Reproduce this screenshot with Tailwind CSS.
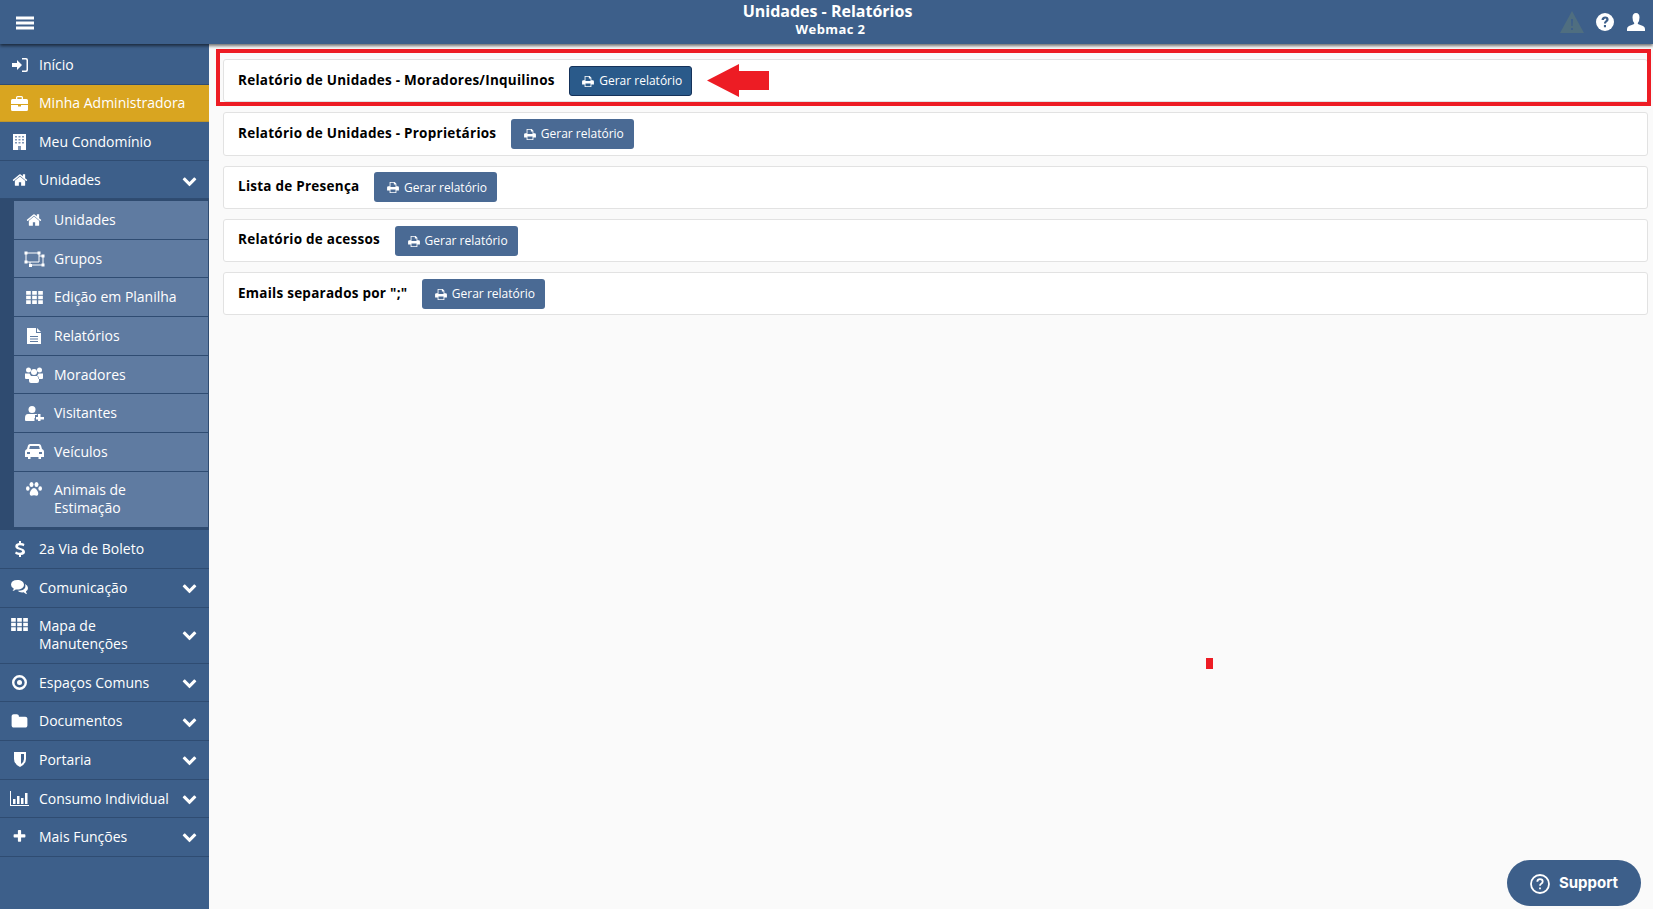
<!DOCTYPE html>
<html lang="pt-BR">

<head>
    <meta charset="UTF-8">
    <title>Unidades - Relatórios</title>
    <script src="https://cdn.jsdelivr.net/npm/@tailwindcss/browser@4"></script>
</head>

<body class="bg-[#fafafa] font-['Open_Sans',sans-serif] text-[14px] h-[909px] overflow-hidden relative">

    <svg class="hidden">
        <symbol id="chev" viewBox="0 0 1792 1792"><path d="M1683 808l-742 741q-19 19-45 19t-45-19l-742-741q-19-19-19-45.5t19-45.5l166-165q19-19 45-19t45 19l531 531 531-531q19-19 45-19t45 19l166 165q19 19 19 45.5t-19 45.5z"/></symbol>
        <symbol id="home" viewBox="0 0 1792 1792"><path d="M1472 992v480q0 26-19 45t-45 19h-384v-384h-256v384h-384q-26 0-45-19t-19-45v-480q0-1 .5-3t.5-3l575-474 575 474q1 2 1 6zm223-69l-62 74q-8 9-21 11h-3q-13 0-21-7l-692-577-692 577q-12 8-24 7-13-2-21-11l-62-74q-8-10-7-23.5t11-21.5l719-599q32-26 76-26t76 26l244 204v-195q0-14 9-23t23-9h192q14 0 23 9t9 23v408l219 182q10 8 11 21.5t-7 23.5z"/></symbol>
        <symbol id="grid" viewBox="0 0 18 14"><path d="M0 0h5v4H0zM6.500 0h5v4h-5zM13 0h5v4h-5zM0 5h5v4H0zM6.500 5h5v4h-5zM13 5h5v4h-5zM0 10h5v4H0zM6.500 10h5v4h-5zM13 10h5v4h-5z"/></symbol>
        <symbol id="print" viewBox="0 0 14 13"><path fill-rule="evenodd" d="M3 0h6l2 2v3h1.500A1.500 1.500 0 0 1 14 6.500V10h-3v3H3v-3H0V6.500A1.500 1.500 0 0 1 1.500 5H3zM4 1v5h6V3H8V1zM4 9v3h6V9z"/></symbol>
    </svg>

    <!-- Top bar -->
    <header class="h-[44px] bg-[#3d5f8a] shadow-[0_2px_3px_rgba(0,0,0,0.55)] relative z-10 flex items-center text-white">
        <svg class="w-[18px] h-[14px] ml-[16px] mt-[1px]" viewBox="0 0 18 14" fill="#fff"><path d="M0 .5h18v3H0zM0 5.500h18v3H0zM0 10.500h18v3H0z"/></svg>
        <div class="absolute left-[2px] right-0 top-0 text-center">
            <div class="text-[16px] font-bold leading-[20px] pt-[1px]">Unidades - Relatórios</div>
            <div class="text-[13px] font-bold leading-[16px] tracking-[0.4px] pl-[6px]">Webmac 2</div>
        </div>
        <div class="ml-auto flex items-center mr-[8px]">
            <svg class="w-[24px] h-[22px]" viewBox="0 0 24 22"><path d="M12 0l12 22H0z" fill="#4f6e80"/><path d="M11 8h2l-.4 7h-1.200zM11 17h2v2h-2z" fill="#3d5f8a"/></svg>
            <svg class="w-[18px] h-[18px] ml-[12px]" viewBox="0 0 18 18"><circle cx="9" cy="9" r="9" fill="#fff"/><path d="M5.500 7q.2-3.500 3.700-3.500 3.400 0 3.400 3 0 1.500-1.600 2.500-1 .6-1 1.500H7.900q0-1.900 1.400-2.800 1-.6 1-1.200 0-1-1.100-1-1.100 0-1.300 1.500zM7.900 12h2.100v2.300H7.900z" fill="#3d5f8a"/></svg>
            <svg class="w-[18px] h-[18px] ml-[13px]" viewBox="0 0 18 18" fill="#fff"><path d="M9 0q3.500 0 3.500 4.500 0 3.500-1.700 5.500-.3.800.6 1.300L16 13q2 .8 2 3v2H0v-2q0-2.200 2-3l4.600-1.700q.9-.5.600-1.300Q5.500 8 5.500 4.500 5.500 0 9 0z"/></svg>
        </div>
    </header>

    <div class="flex h-[865px]">
        <!-- Sidebar -->
        <nav class="w-[209px] shrink-0 bg-[#3d5f8a] text-white leading-[17.7px] pt-[1px]">
            <a class="flex items-center h-[40px] pr-[10px] border-b border-[#2f4c72]">
                <span class="w-[39px] flex justify-center"><svg class="w-[16px] h-[14px]" viewBox="0 0 16 14" fill="#fff"><path d="M0 5h5V2l5 5-5 5V9H0zM10 0h4q2 0 2 2v10q0 2-2 2h-4v-1.500h3.500q1 0 1-1v-9q0-1-1-1H10z"/></svg></span>Início
            </a>
            <a class="flex items-center h-[37px] pr-[10px] bg-[#d9a520] border-b border-[#c0952a]">
                <span class="w-[39px] flex justify-center"><svg class="w-[17px] h-[15px]" viewBox="0 0 17 15" fill="#fff"><path fill-rule="evenodd" d="M5 3V1.500Q5 0 6.500 0h4Q12 0 12 1.500V3h3.500Q17 3 17 4.500V8H0V4.500Q0 3 1.500 3zM6.300 3h4.400V1.300H6.300zM0 9h7v1.500h3V9h7v4.500q0 1.500-1.500 1.500h-14Q0 15 0 13.500z"/></svg></span>Minha Administradora
            </a>
            <a class="flex items-center h-[39px] pt-[1px] pr-[10px] border-b border-[#2f4c72]">
                <span class="w-[39px] flex justify-center"><svg class="w-[13px] h-[16px]" viewBox="0 0 13 16"><rect width="13" height="16" fill="#fff"/><path d="M2 2h2v1.500H2zM5.500 2h2v1.500h-2zM9 2h2v1.500H9zM2 5h2v1.500H2zM5.500 5h2v1.500h-2zM9 5h2v1.500H9zM2 8h2v1.500H2zM5.500 8h2v1.500h-2zM9 8h2v1.500H9zM5 12h3v4H5z" fill="#7f96b5"/></svg></span>Meu Condomínio
            </a>
            <a class="flex items-center h-[38px] pt-[1px] pr-[10px] border-b border-[#2f4c72]">
                <span class="w-[39px] flex justify-center"><svg class="w-[16px] h-[16px]" fill="#fff"><use href="#home"/></svg></span>Unidades
                <svg class="w-[15px] h-[15px] ml-auto mr-[2px]" fill="#fff"><use href="#chev"/></svg>
            </a>

            <!-- Submenu -->
            <div class="bg-[#2f4b70] pl-[14px] pr-[1px] pt-[2px] pb-[3px]">
                <a class="flex items-center h-[38.700px] bg-[#5f7ba1] border-b border-[#2f4c72]"><span class="w-[40px] flex justify-center"><svg class="w-[16px] h-[16px]" fill="#fff"><use href="#home"/></svg></span>Unidades</a>
                <a class="flex items-center h-[38.700px] bg-[#5f7ba1] border-b border-[#2f4c72]"><span class="w-[40px] flex justify-center"><svg class="w-[21px] h-[16px]" viewBox="0 0 21 16" fill="none" stroke="#fff"><path d="M2 2h13v9H2zM15 5h4v9H6v-3"/><path d="M.5.500h3v3h-3zM13.500.500h3v3h-3zM.5 9.500h3v3h-3zM17.500 3.500h3v3h-3zM17.500 12.500h3v3h-3zM5 13h3v3H5z" fill="#fff" stroke="none"/></svg></span>Grupos</a>
                <a class="flex items-center h-[38.700px] bg-[#5f7ba1] border-b border-[#2f4c72]"><span class="w-[40px] flex justify-center"><svg class="w-[17px] h-[13px]" fill="#fff"><use href="#grid"/></svg></span>Edição em Planilha</a>
                <a class="flex items-center h-[38.700px] bg-[#5f7ba1] border-b border-[#2f4c72]"><span class="w-[40px] flex justify-center"><svg class="w-[14px] h-[16px]" viewBox="0 0 14 16"><path d="M0 0h9v5h5v11H0z" fill="#fff"/><path d="M10 0l4 4h-4z" fill="#fff"/><path d="M3 8h8v1H3zM3 10.500h8v1H3zM3 13h8v1H3z" fill="#5f7ba1"/></svg></span>Relatórios</a>
                <a class="flex items-center h-[38.700px] bg-[#5f7ba1] border-b border-[#2f4c72]"><span class="w-[40px] flex justify-center"><svg class="w-[18px] h-[16px]" viewBox="0 0 18 16" fill="#fff"><circle cx="3.500" cy="3" r="2.500"/><circle cx="14.500" cy="3" r="2.500"/><circle cx="9" cy="5" r="3"/><path d="M0 6.500h4.500L6 9q-1.500 1-1.500 3H1q-1 0-1-1zM18 6.500h-4.500L12 9q1.500 1 1.500 3H17q1 0 1-1zM6 9h6q2 0 2 3v2q0 2-2 2H6q-2 0-2-2v-2q0-3 2-3z"/></svg></span>Moradores</a>
                <a class="flex items-center h-[38.700px] bg-[#5f7ba1] border-b border-[#2f4c72]"><span class="w-[40px] flex justify-center"><svg class="w-[19px] h-[15px]" viewBox="0 0 19 15" fill="#fff"><circle cx="7" cy="3.500" r="3.500"/><path d="M3 8h8q1 0 1.500 1H10v3h-.5v3H1q-1 0-1-1v-2q0-4 3-4zM13 8h2.500v3H19v2.500h-3.500V15H13v-1.500H11V11h2z"/></svg></span>Visitantes</a>
                <a class="flex items-center h-[38.700px] bg-[#5f7ba1] border-b border-[#2f4c72]"><span class="w-[40px] flex justify-center"><svg class="w-[19px] h-[15px]" viewBox="0 0 19 15" fill="#fff"><path fill-rule="evenodd" d="M5 0h9q1.500 0 2 1.500L17 5q2 .5 2 2.500V13h-3v2h-2.500v-2h-8v2H3v-2H0V7.500Q0 5.500 2 5l1-3.500Q3.500 0 5 0zM5 2L4.200 5h10.600L14 2zM2 8v2h3V8zM14 8v2h3V8z"/></svg></span>Veículos</a>
                <a class="flex items-start bg-[#5f7ba1] pt-[9px] h-[55.500px]"><span class="w-[40px] flex justify-center pt-[1px]"><svg class="w-[16px] h-[14px]" viewBox="0 0 16 14" fill="#fff"><ellipse cx="5.500" cy="2.500" rx="2" ry="2.500"/><ellipse cx="10.500" cy="2.500" rx="2" ry="2.500"/><ellipse cx="1.800" cy="6.500" rx="1.800" ry="2.300"/><ellipse cx="14.200" cy="6.500" rx="1.800" ry="2.300"/><path d="M8 6q2 0 3.500 3 1.500 2.500.5 4-1 1-2.500.5-1.500-.5-3 0-1.500.5-2.500-.5-1-1.500.5-4Q6 6 8 6z"/></svg></span><span>Animais de<br>Estimação</span></a>
            </div>

            <a class="flex items-center h-[38.700px] pr-[10px] border-b border-[#2f4c72]">
                <span class="w-[39px] flex justify-center"><svg class="w-[10px] h-[16px]" viewBox="0 0 10 16" fill="#fff"><path d="M4 0h2v2q2 .2 3.500 1L8.700 5.200Q7 4.300 5 4.300q-2 0-2 1.200 0 .9 2.500 1.500Q10 8 10 11q0 2.600-4 3v2H4v-2q-2.500-.2-4-1.400l1-2.100q2 1.200 4 1.200 2.200 0 2.200-1.400 0-.9-2.700-1.600Q.3 7.800.3 5.400.3 2.500 4 2z"/></svg></span>2a Via de Boleto
            </a>
            <a class="flex items-center h-[38.700px] pr-[10px] border-b border-[#2f4c72]">
                <span class="w-[39px] flex justify-center"><svg class="w-[17px] h-[15px]" viewBox="0 0 17 15" fill="#fff"><path d="M6.500 0C10 0 13 2 13 4.800s-3 4.800-6.500 4.800q-1 0-1.800-.2Q3.500 10.500 1.500 11 2.700 9.800 2.700 8.500 0 7.200 0 4.800 0 0 6.500 0z"/><path d="M14 4q3 1.300 3 4 0 2.200-2 3.300 0 1.500 1.200 3-2.200-.5-3.500-2-4 .5-6.200-1.500 6 .3 7.700-3.300.6-1.900-.2-3.500z"/></svg></span>Comunicação
                <svg class="w-[15px] h-[15px] ml-auto mr-[2px]" fill="#fff"><use href="#chev"/></svg>
            </a>
            <a class="flex items-center pt-[9px] pb-[11px] h-[56.700px] pr-[10px] border-b border-[#2f4c72]">
                <span class="w-[39px] flex justify-center self-start pt-[1px]"><svg class="w-[17px] h-[13px]" fill="#fff"><use href="#grid"/></svg></span><span>Mapa de<br>Manutenções</span>
                <svg class="w-[15px] h-[15px] ml-auto mr-[2px]" fill="#fff"><use href="#chev"/></svg>
            </a>
            <a class="flex items-center h-[38px] pr-[10px] border-b border-[#2f4c72]">
                <span class="w-[39px] flex justify-center"><svg class="w-[15px] h-[15px]" viewBox="0 0 15 15"><circle cx="7.500" cy="7.500" r="6.300" fill="none" stroke="#fff" stroke-width="2.400"/><circle cx="7.500" cy="7.500" r="2.500" fill="#fff"/></svg></span>Espaços Comuns
                <svg class="w-[15px] h-[15px] ml-auto mr-[2px]" fill="#fff"><use href="#chev"/></svg>
            </a>
            <a class="flex items-center h-[38.700px] pr-[10px] border-b border-[#2f4c72]">
                <span class="w-[39px] flex justify-center"><svg class="w-[17px] h-[17px]" viewBox="0 0 1792 1792" fill="#fff"><path d="M1728 608v704q0 92-66 158t-158 66h-1216q-92 0-158-66t-66-158v-960q0-92 66-158t158-66h320q92 0 158 66t66 158v32h672q92 0 158 66t66 158z"/></svg></span>Documentos
                <svg class="w-[15px] h-[15px] ml-auto mr-[2px]" fill="#fff"><use href="#chev"/></svg>
            </a>
            <a class="flex items-center h-[38.700px] pr-[10px] border-b border-[#2f4c72]">
                <span class="w-[39px] flex justify-center"><svg class="w-[12px] h-[15px]" viewBox="0 0 12 15"><path d="M0 0h12v7q0 5-6 8-6-3-6-8z" fill="#fff"/><path d="M7 2h3v5q0 3-3 5z" fill="#3d5f8a"/></svg></span>Portaria
                <svg class="w-[15px] h-[15px] ml-auto mr-[2px]" fill="#fff"><use href="#chev"/></svg>
            </a>
            <a class="flex items-center h-[38.400px] pr-[10px] border-b border-[#2f4c72]">
                <span class="w-[39px] flex justify-center"><svg class="w-[19px] h-[15px]" viewBox="0 0 19 15" fill="#fff"><path d="M0 0h1v14h18v1H0zM3 8h2.500v5H3zM7 5h2.500v8H7zM11 7h2.500v6H11zM15 2h2.500v11H15z"/></svg></span>Consumo Individual
                <svg class="w-[15px] h-[15px] ml-auto mr-[2px]" fill="#fff"><use href="#chev"/></svg>
            </a>
            <a class="flex items-center h-[38.700px] pr-[10px] border-b border-[#2f4c72]">
                <span class="w-[39px] flex justify-center"><svg class="w-[15px] h-[15px]" viewBox="0 0 1792 1792" fill="#fff"><path d="M1600 736v192q0 40-28 68t-68 28h-416v416q0 40-28 68t-68 28h-192q-40 0-68-28t-28-68v-416h-416q-40 0-68-28t-28-68v-192q0-40 28-68t68-28h416v-416q0-40 28-68t68-28h192q40 0 68 28t28 68v416h416q40 0 68 28t28 68z"/></svg></span>Mais Funções
                <svg class="w-[15px] h-[15px] ml-auto mr-[2px]" fill="#fff"><use href="#chev"/></svg>
            </a>
        </nav>

        <!-- Content -->
        <main class="flex-1 pl-[14px] pr-[5px] pt-[15px] flex flex-col gap-[10px]">
            <div class="h-[43.300px] bg-white border border-[#e2e2e2] rounded-[3px] pl-[14px] flex items-center gap-[14.500px]">
                <b class="font-bold text-[13.500px] tracking-[0.25px] text-black mb-[2px]">Relatório de Unidades - Moradores/Inquilinos</b>
                <button class="h-[30px] w-[123px] pt-[1px] pl-[3px] bg-[#2a5a8a] border border-[#15325a] rounded-[3px] text-white text-[12px] flex items-center justify-center gap-[5px]"><svg class="w-[12px] h-[11px]" fill="#fff"><use href="#print"/></svg>Gerar relatório</button>
            </div>
            <div class="h-[43.300px] bg-white border border-[#e2e2e2] rounded-[3px] pl-[14px] flex items-center gap-[14.500px]">
                <b class="font-bold text-[13.500px] tracking-[0.25px] text-black mb-[2px]">Relatório de Unidades - Proprietários</b>
                <button class="h-[30px] w-[123px] pt-[1px] pl-[3px] bg-[#4a6a94] rounded-[3px] text-white text-[12px] flex items-center justify-center gap-[5px]"><svg class="w-[12px] h-[11px]" fill="#fff"><use href="#print"/></svg>Gerar relatório</button>
            </div>
            <div class="h-[43.300px] bg-white border border-[#e2e2e2] rounded-[3px] pl-[14px] flex items-center gap-[14.500px]">
                <b class="font-bold text-[13.500px] tracking-[0.25px] text-black mb-[2px]">Lista de Presença</b>
                <button class="h-[30px] w-[123px] pt-[1px] pl-[3px] bg-[#4a6a94] rounded-[3px] text-white text-[12px] flex items-center justify-center gap-[5px]"><svg class="w-[12px] h-[11px]" fill="#fff"><use href="#print"/></svg>Gerar relatório</button>
            </div>
            <div class="h-[43.300px] bg-white border border-[#e2e2e2] rounded-[3px] pl-[14px] flex items-center gap-[14.500px]">
                <b class="font-bold text-[13.500px] tracking-[0.25px] text-black mb-[2px]">Relatório de acessos</b>
                <button class="h-[30px] w-[123px] pt-[1px] pl-[3px] bg-[#4a6a94] rounded-[3px] text-white text-[12px] flex items-center justify-center gap-[5px]"><svg class="w-[12px] h-[11px]" fill="#fff"><use href="#print"/></svg>Gerar relatório</button>
            </div>
            <div class="h-[43.300px] bg-white border border-[#e2e2e2] rounded-[3px] pl-[14px] flex items-center gap-[14.500px]">
                <b class="font-bold text-[13.500px] tracking-[0.25px] text-black mb-[2px]">Emails separados por ";"</b>
                <button class="h-[30px] w-[123px] pt-[1px] pl-[3px] bg-[#4a6a94] rounded-[3px] text-white text-[12px] flex items-center justify-center gap-[5px]"><svg class="w-[12px] h-[11px]" fill="#fff"><use href="#print"/></svg>Gerar relatório</button>
            </div>
        </main>
    </div>

    <!-- annotation drawn over the screenshot -->
    <div class="absolute left-[216px] top-[49px] w-[1435px] h-[57px] border-[4px] border-[#ed1c24]"></div>
    <svg class="absolute left-[707px] top-[64px] w-[62px] h-[33px]" viewBox="0 0 62 33" fill="#ed1c24"><path d="M0 16.500L32 0v7h30v19H32v7z"/></svg>
    <div class="absolute left-[1206px] top-[658px] w-[7px] h-[11px] bg-[#ed1c24]"></div>

    <!-- support button -->
    <div class="absolute left-[1507px] top-[860px] w-[134px] h-[46px] pt-[1px] rounded-full bg-[#3d5f8a] flex items-center justify-center gap-[9px] text-white font-['Inter',sans-serif] font-bold text-[15px]">
        <svg class="w-[20px] h-[20px]" viewBox="0 0 20 20" fill="none" stroke="#fff" stroke-width="1.800"><circle cx="10" cy="10" r="9"/><path d="M7.300 7.700Q7.500 5.200 10 5.200q2.700 0 2.700 2.400 0 1.400-1.500 2.200-1.200.7-1.200 2"/><path d="M10 13.500v1.800"/></svg>
        Support
    </div>
</body>

</html>
